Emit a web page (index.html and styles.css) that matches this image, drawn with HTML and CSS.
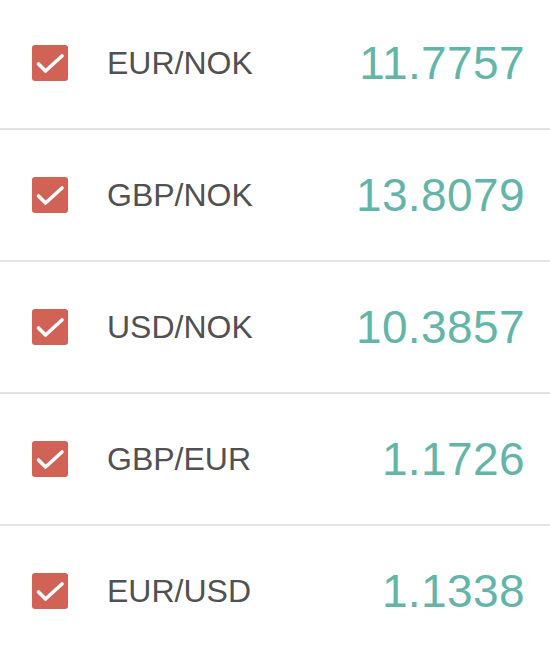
FILE: index.html
```html
<!DOCTYPE html>
<html>
<head>
<meta charset="utf-8">
<link rel="stylesheet" href="styles.css">
</head>
<body>
<ul class="list">
  <li class="row">
    <span class="check"><svg viewBox="0 0 36 36" width="36" height="36"><path d="M6.5 19 L13.5 26 L30 11" fill="none" stroke="#fff" stroke-width="3.6" stroke-linecap="round" stroke-linejoin="round"/></svg></span>
    <span class="pair">EUR/NOK</span>
    <span class="rate">11.7757</span>
  </li>
  <li class="row">
    <span class="check"><svg viewBox="0 0 36 36" width="36" height="36"><path d="M6.5 19 L13.5 26 L30 11" fill="none" stroke="#fff" stroke-width="3.6" stroke-linecap="round" stroke-linejoin="round"/></svg></span>
    <span class="pair">GBP/NOK</span>
    <span class="rate">13.8079</span>
  </li>
  <li class="row">
    <span class="check"><svg viewBox="0 0 36 36" width="36" height="36"><path d="M6.5 19 L13.5 26 L30 11" fill="none" stroke="#fff" stroke-width="3.6" stroke-linecap="round" stroke-linejoin="round"/></svg></span>
    <span class="pair">USD/NOK</span>
    <span class="rate">10.3857</span>
  </li>
  <li class="row">
    <span class="check"><svg viewBox="0 0 36 36" width="36" height="36"><path d="M6.5 19 L13.5 26 L30 11" fill="none" stroke="#fff" stroke-width="3.6" stroke-linecap="round" stroke-linejoin="round"/></svg></span>
    <span class="pair">GBP/EUR</span>
    <span class="rate">1.1726</span>
  </li>
  <li class="row">
    <span class="check"><svg viewBox="0 0 36 36" width="36" height="36"><path d="M6.5 19 L13.5 26 L30 11" fill="none" stroke="#fff" stroke-width="3.6" stroke-linecap="round" stroke-linejoin="round"/></svg></span>
    <span class="pair">EUR/USD</span>
    <span class="rate">1.1338</span>
  </li>
</ul>
</body>
</html>
```
FILE: styles.css
```css
html, body {
  margin: 0;
  padding: 0;
  background: #ffffff;
  font-family: "Liberation Sans", Arial, sans-serif;
}
.list {
  list-style: none;
  margin: -2px 0 0 0;
  padding: 0;
}
.row {
  display: flex;
  align-items: center;
  height: 130px;
  padding: 0 25px 0 32px;
  border-bottom: 2px solid #e4e4e4;
}
.check {
  width: 36px;
  height: 36px;
  border-radius: 3px;
  background: #d06256;
  display: flex;
  flex-shrink: 0;
}
.pair {
  margin-left: 39px;
  font-size: 32px;
  color: #515151;
  flex: 1;
}
.rate {
  font-size: 46px;
  letter-spacing: 0.4px;
  color: #63b5a8;
}
```
